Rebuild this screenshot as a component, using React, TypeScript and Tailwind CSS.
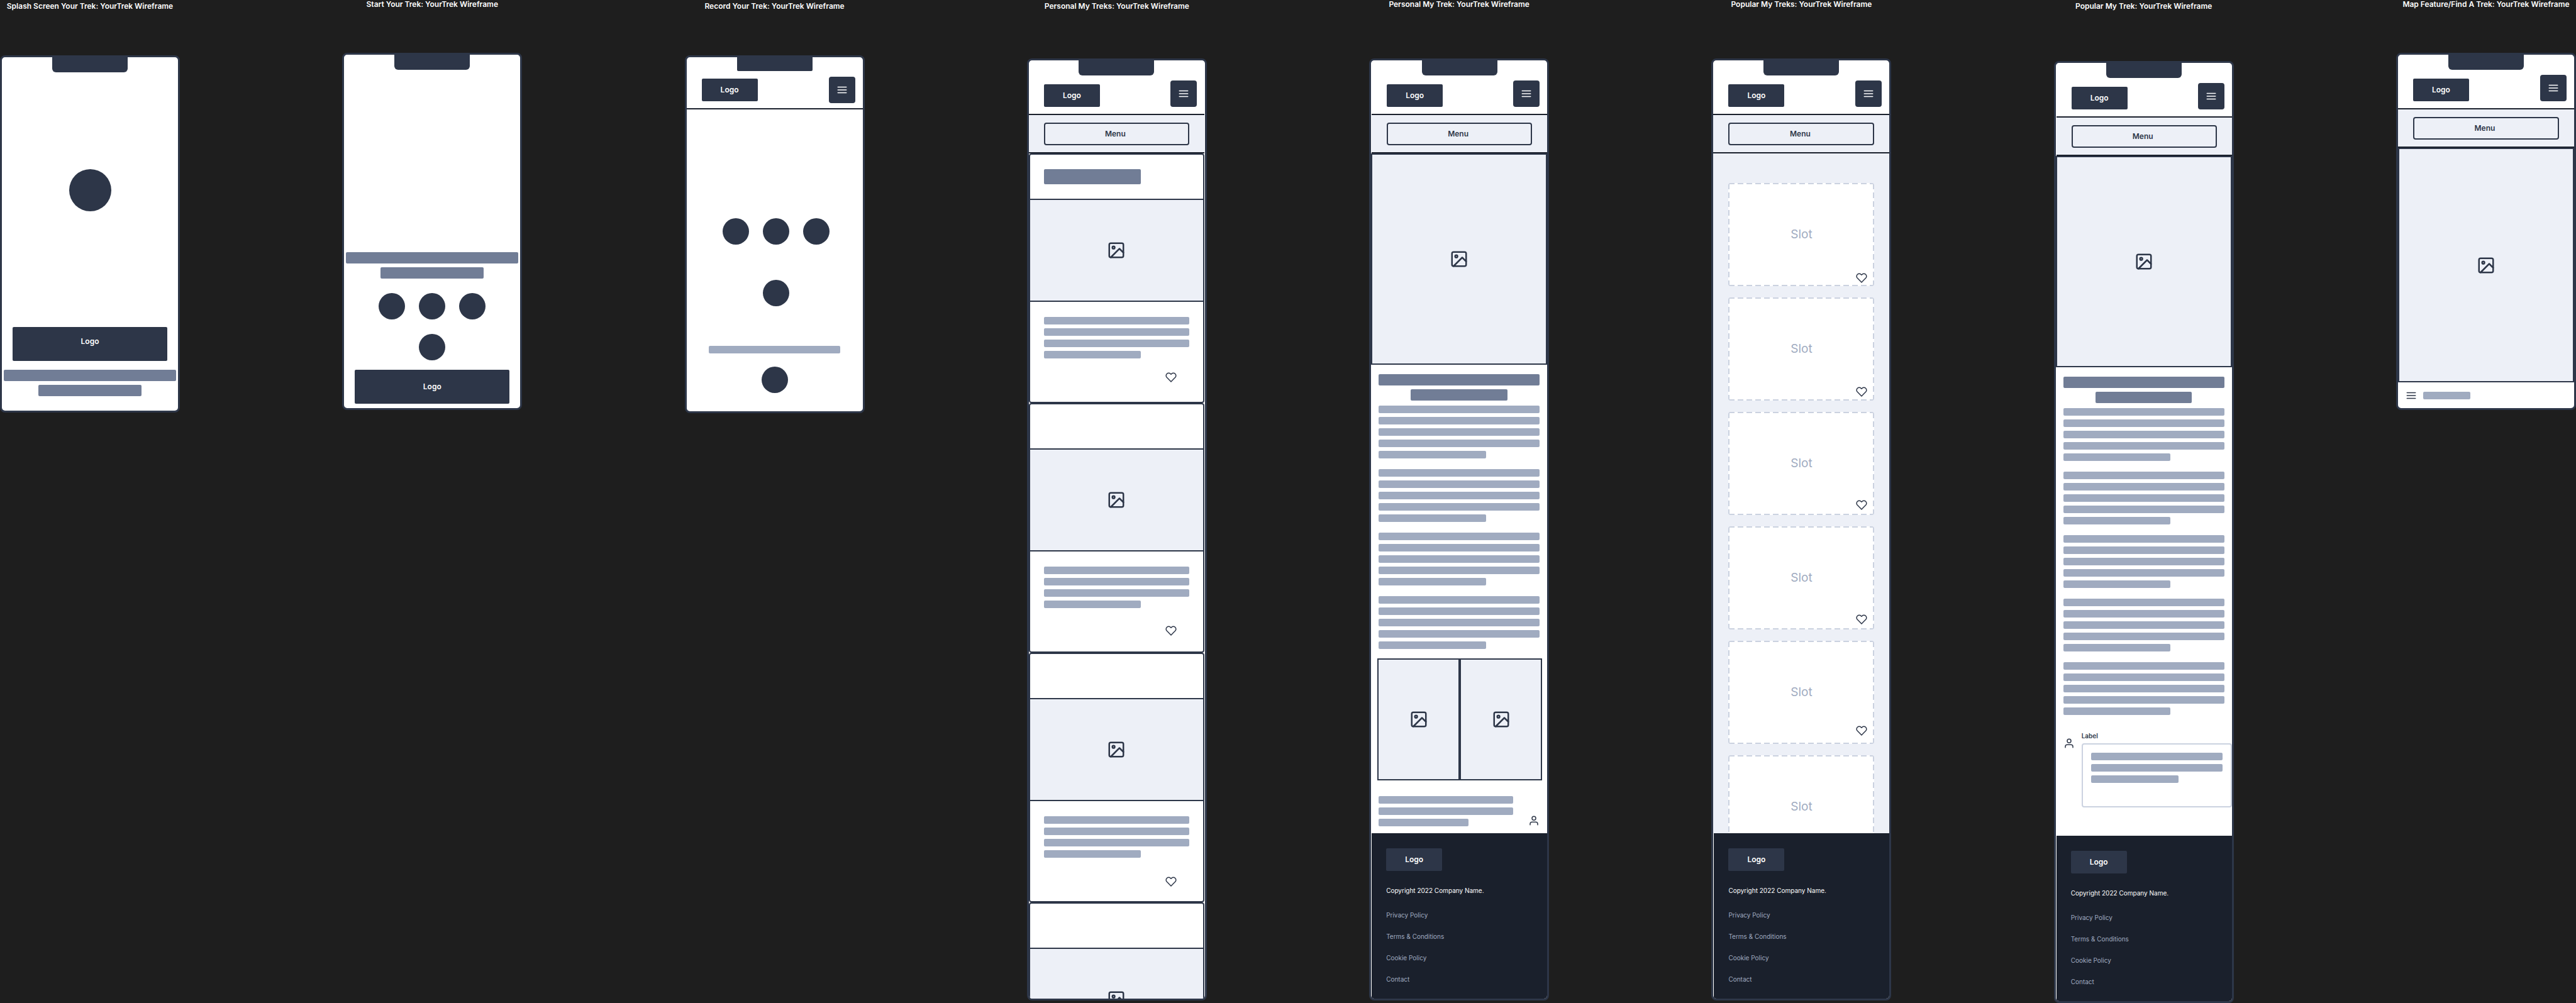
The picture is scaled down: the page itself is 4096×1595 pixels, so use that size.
import type { ReactNode } from "react";

const BODY_BLOCK_WIDTHS = ["w-full", "w-full", "w-full", "w-full", "w-2/3"];

function MenuIcon() {
  return (
    <svg viewBox="0 0 24 24" className="size-[18px]" fill="none" stroke="currentColor" strokeWidth={2} strokeLinecap="round" strokeLinejoin="round" aria-hidden="true">
      <path d="M3 12h18M3 6h18M3 18h18" />
    </svg>
  );
}

function ImageIcon() {
  return (
    <svg viewBox="0 0 24 24" className="size-[30px]" fill="none" stroke="currentColor" strokeWidth={2} strokeLinecap="round" strokeLinejoin="round" aria-hidden="true">
      <rect x="3" y="3" width="18" height="18" rx="2" />
      <circle cx="8.5" cy="8.5" r="1.5" />
      <path d="M21 15l-5-5L5 21" />
    </svg>
  );
}

function HeartIcon() {
  return (
    <svg viewBox="0 0 24 24" className="size-[18px]" fill="none" stroke="currentColor" strokeWidth={2} strokeLinecap="round" strokeLinejoin="round" aria-hidden="true">
      <path d="M20.84 4.61a5.5 5.5 0 0 0-7.78 0L12 5.67l-1.06-1.06a5.5 5.5 0 0 0-7.78 7.78l1.06 1.06L12 21.23l7.78-7.78 1.06-1.06a5.5 5.5 0 0 0 0-7.78z" />
    </svg>
  );
}

function UserIcon() {
  return (
    <svg viewBox="0 0 24 24" className="size-[18px] shrink-0" fill="none" stroke="currentColor" strokeWidth={2} strokeLinecap="round" strokeLinejoin="round" aria-hidden="true">
      <path d="M20 21v-2a4 4 0 0 0-4-4H8a4 4 0 0 0-4 4v2" />
      <circle cx="12" cy="7" r="4" />
    </svg>
  );
}

function Screen({ title, offset, gap, height = "", children }: { title: string; offset: string; gap: string; height?: string; children: ReactNode }) {
  return (
    <section className={`flex w-[286px] shrink-0 flex-col ${offset}`}>
      <h2 className="text-center text-xs leading-3 font-semibold whitespace-nowrap text-white">{title}</h2>
      <div className={`flex flex-col overflow-hidden rounded-lg border-3 border-[#2d3648] bg-white text-[#2d3648] ${gap} ${height}`}>{children}</div>
    </section>
  );
}

function Notch({ size = "h-6 rounded-b-md" }: { size?: string }) {
  return <div className={`mx-auto w-[120px] shrink-0 bg-[#2d3648] ${size}`} />;
}

function Logo({ className = "h-9 w-[89px]" }: { className?: string }) {
  return <div className={`flex items-center justify-center rounded-xs bg-[#2d3648] text-xs font-semibold text-white ${className}`}>Logo</div>;
}

function HeaderRow({ className }: { className: string }) {
  return (
    <div className={`flex justify-between border-b-2 border-[#1a202c] pr-3 pl-6 ${className}`}>
      <Logo />
      <button type="button" aria-label="Open menu" className="flex size-[42px] items-center justify-center rounded-sm bg-[#2d3648] text-white">
        <MenuIcon />
      </button>
    </div>
  );
}

function AppHeader({ className = "" }: { className?: string }) {
  return (
    <header className={`shrink-0 ${className}`}>
      <Notch />
      <HeaderRow className="items-end pt-2 pb-[11px]" />
      <nav className="border-b-2 border-[#1a202c] bg-[#edf0f7] px-6 pt-3 pb-[11px]">
        <button type="button" className="h-9 w-full rounded-sm border-2 border-[#2d3648] pr-1 text-xs font-semibold">
          Menu
        </button>
      </nav>
    </header>
  );
}

function HeadingBars({ wide, narrow }: { wide: string; narrow: string }) {
  return (
    <div className="flex flex-col items-center gap-1.5">
      <div className={`h-[18px] rounded-xs bg-[#717d96] ${wide}`} />
      <div className={`h-[18px] rounded-xs bg-[#717d96] ${narrow}`} />
    </div>
  );
}

function TextBars({ widths, className = "" }: { widths: string[]; className?: string }) {
  return (
    <div className={`flex flex-col gap-1.5 ${className}`}>
      {widths.map((width, i) => (
        <div key={i} className={`h-3 rounded-xs bg-[#a0abc0] ${width}`} />
      ))}
    </div>
  );
}

function Dot({ className = "size-[42px]" }: { className?: string }) {
  return <div className={`rounded-full bg-[#2d3648] ${className}`} />;
}

function DotCluster({ gap }: { gap: string }) {
  return (
    <div className={`flex flex-col items-center ${gap}`}>
      <div className="flex gap-[22px]">
        <Dot />
        <Dot />
        <Dot />
      </div>
      <Dot />
    </div>
  );
}

function ImageBox({ className }: { className: string }) {
  return (
    <div className={`flex items-center justify-center border-[#2d3648] bg-[#edf0f7] ${className}`}>
      <ImageIcon />
    </div>
  );
}

function TrekCard({ heading = false, heartGap }: { heading?: boolean; heartGap: string }) {
  return (
    <article className="mr-px h-[397px] shrink-0 rounded-sm border-2 border-[#2d3648]">
      <div className="flex h-[70px] items-center pl-[22px]">{heading && <div className="h-6 w-[154px] rounded-xs bg-[#717d96]" />}</div>
      <ImageBox className="h-[164px] border-y-2" />
      <div className="px-[22px] pt-6">
        <TextBars widths={["w-full", "w-full", "w-full", "w-2/3"]} />
        <div className={`flex justify-end pr-5 ${heartGap}`}>
          <button type="button" aria-label="Like trek">
            <HeartIcon />
          </button>
        </div>
      </div>
    </article>
  );
}

/* Dashed outline: one 9px-on, 5px-off strip along each edge of the white panel. */
function Slot({ heart }: { heart: string }) {
  return (
    <div className="relative flex h-[164px] shrink-0 items-center justify-center rounded-sm bg-white bg-[image:repeating-linear-gradient(90deg,transparent_0_1px,#cbd2e0_1px_10px,transparent_10px_14px),repeating-linear-gradient(90deg,transparent_0_1px,#cbd2e0_1px_10px,transparent_10px_14px),repeating-linear-gradient(180deg,transparent_0_1px,#cbd2e0_1px_10px,transparent_10px_14px),repeating-linear-gradient(180deg,transparent_0_1px,#cbd2e0_1px_10px,transparent_10px_14px)] bg-[length:100%_2px,100%_2px,2px_100%,2px_100%] bg-[position:0_0,0_100%,0_0,100%_0] bg-no-repeat text-[19px] text-[#a0abc0]">
      Slot
      <button type="button" aria-label="Like slot" className={`absolute right-[11px] text-[#2d3648] ${heart}`}>
        <HeartIcon />
      </button>
    </div>
  );
}

function TrekArticle({ blocks }: { blocks: number }) {
  return (
    <>
      <ImageBox className="h-[336px] shrink-0 border-2" />
      <div className="px-3 pt-[15px]">
        <HeadingBars wide="w-full" narrow="w-3/5" />
        <div className="mt-2 flex flex-col gap-[17px]">
          {Array.from({ length: blocks }, (_, i) => (
            <TextBars key={i} widths={BODY_BLOCK_WIDTHS} />
          ))}
        </div>
      </div>
    </>
  );
}

function Footer() {
  return (
    <footer className="ml-px flex grow flex-col items-start bg-[#1a202c] pt-6 pl-[23px] text-[10px] leading-[18px]">
      <Logo />
      <p className="mt-[22px] text-white">Copyright 2022 Company Name.</p>
      <nav className="mt-[21px] flex flex-col gap-4 text-[#a0abc0]">
        <a href="#privacy">Privacy Policy</a>
        <a href="#terms">Terms &amp; Conditions</a>
        <a href="#cookies">Cookie Policy</a>
        <a href="#contact">Contact</a>
      </nav>
    </footer>
  );
}

export default function App() {
  return (
    <main className="flex min-h-screen items-start justify-between bg-[#1e1e1e] font-['Inter',sans-serif]">
      <Screen title="Splash Screen Your Trek: YourTrek Wireframe" offset="pt-1" gap="mt-[72px]">
        <Notch />
        <div className="flex flex-col items-center pt-[154px]">
          <Dot className="size-[67px]" />
          <Logo className="mt-[184px] h-[54px] w-[246px] pb-2" />
        </div>
        <div className="px-[3px] pt-3.5 pb-[23px]">
          <HeadingBars wide="w-full" narrow="w-3/5" />
        </div>
      </Screen>

      <Screen title="Start Your Trek: YourTrek Wireframe" offset="pt-px" gap="mt-[71px]">
        <Notch />
        <div className="px-[3px] pt-[290px] pb-[23px]">
          <HeadingBars wide="w-full" narrow="w-3/5" />
        </div>
        <DotCluster gap="gap-[23px]" />
        <div className="flex justify-center pt-[15px] pb-[7px]">
          <Logo className="h-[54px] w-[246px]" />
        </div>
      </Screen>

      <Screen title="Record Your Trek: YourTrek Wireframe" offset="pt-1" gap="mt-[72px]">
        <Notch size="h-[22px] rounded-b-xs" />
        <HeaderRow className="items-center pt-[9px] pb-2" />
        <div className="flex flex-col items-center pt-[173px] pb-[29px]">
          <div className="ml-1">
            <DotCluster gap="gap-14" />
          </div>
          <div className="mt-[63px] h-3 w-[209px] rounded-xs bg-[#a0abc0]" />
          <Dot className="mt-[21px] size-[42px]" />
        </div>
      </Screen>

      <Screen title="Personal My Treks: YourTrek Wireframe" offset="pt-1" gap="mt-[77px]" height="h-[1498px]">
        <AppHeader className="mr-px" />
        <TrekCard heading heartGap="pt-[21px]" />
        <TrekCard heartGap="pt-[27px]" />
        <TrekCard heartGap="pt-[29px]" />
        <TrekCard heartGap="pt-[29px]" />
      </Screen>

      <Screen title="Personal My Trek: YourTrek Wireframe" offset="pt-px" gap="mt-20" height="h-[1498px]">
        <AppHeader className="ml-px" />
        <TrekArticle blocks={4} />
        <div className="mr-2 ml-2.5 mt-[15px] flex shrink-0">
          <ImageBox className="h-[194px] flex-1 border-2" />
          <ImageBox className="h-[194px] flex-1 border-2" />
        </div>
        <div className="flex items-end justify-between px-3 pt-[25px] pb-[11px]">
          <TextBars className="w-[214px]" widths={["w-full", "w-full", "w-2/3"]} />
          <UserIcon />
        </div>
        <Footer />
      </Screen>

      <Screen title="Popular My Treks: YourTrek Wireframe" offset="pt-px" gap="mt-20" height="h-[1498px]">
        <AppHeader />
        <div className="flex h-[1081px] shrink-0 flex-col gap-[18px] overflow-hidden bg-[#edf0f7] px-6 pt-[47px]">
          <Slot heart="bottom-1" />
          <Slot heart="bottom-[5px]" />
          <Slot heart="bottom-[7px]" />
          <Slot heart="bottom-[7px]" />
          <Slot heart="bottom-3" />
          <Slot heart="bottom-3" />
        </div>
        <Footer />
      </Screen>

      <Screen title="Popular My Trek: YourTrek Wireframe" offset="pt-1" gap="mt-[81px]" height="h-[1498px]">
        <AppHeader className="ml-px" />
        <TrekArticle blocks={5} />
        <div className="flex gap-[11px] pt-[26px] pb-[45px] pl-3">
          <div className="pt-2.5">
            <UserIcon />
          </div>
          <div className="flex-1">
            <label htmlFor="comment" className="mb-[5px] block text-[10px] leading-[14px] font-semibold">
              Label
            </label>
            <div className="relative">
              <textarea id="comment" className="block h-[102px] w-full resize-none rounded-sm border-2 border-[#cbd2e0] bg-white" />
              <TextBars className="pointer-events-none absolute inset-x-[15px] top-[15px]" widths={["w-full", "w-full", "w-2/3"]} />
            </div>
          </div>
        </div>
        <Footer />
      </Screen>

      <Screen title="Map Feature/Find A Trek: YourTrek Wireframe" offset="pt-px" gap="mt-[71px]">
        <AppHeader />
        <ImageBox className="h-[373px] border-2" />
        <div className="flex h-[41px] items-center gap-2.5 pl-3">
          <button type="button" aria-label="Map options">
            <MenuIcon />
          </button>
          <div className="h-3 w-[75px] rounded-xs bg-[#a0abc0]" />
        </div>
      </Screen>
    </main>
  );
}
